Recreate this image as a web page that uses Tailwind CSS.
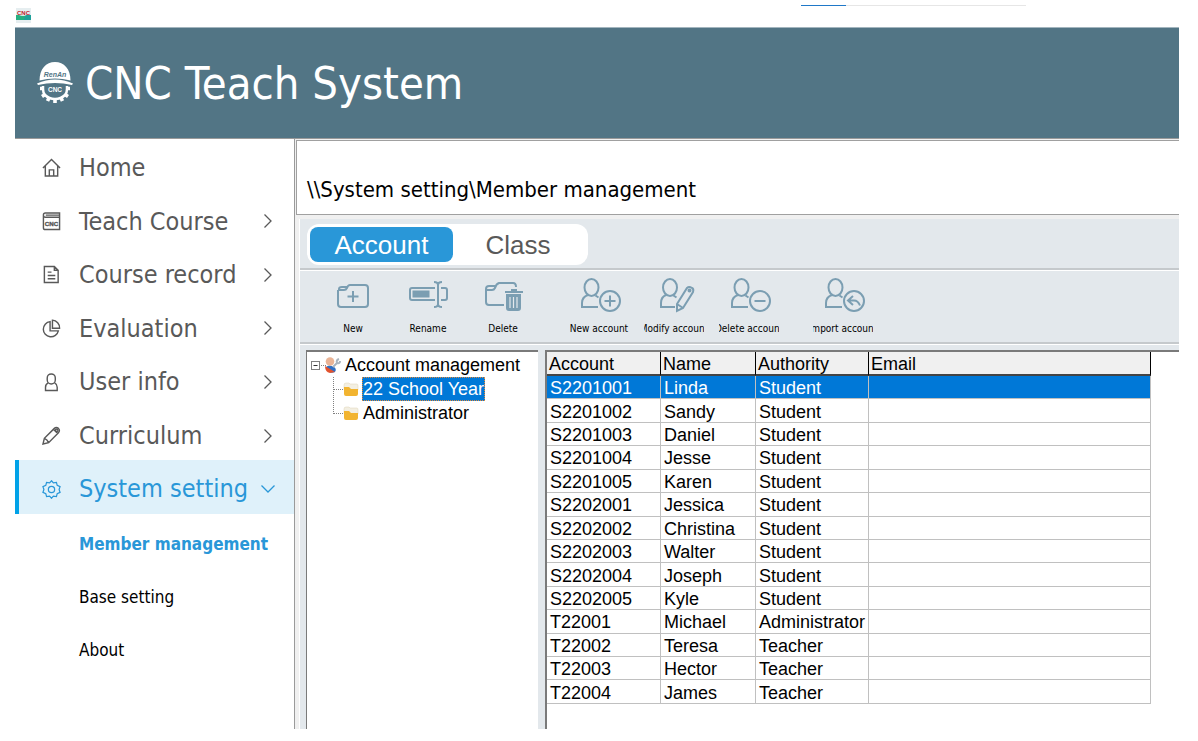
<!DOCTYPE html>
<html lang="en">
<head>
    <meta charset="UTF-8">
    <meta name="viewport" content="width=device-width, initial-scale=1.0">
    <title>CNC Teach System</title>
    <script src="https://cdn.jsdelivr.net/npm/@tailwindcss/browser@4"></script>
</head>
<body class="flex flex-col min-h-screen bg-white pl-[15px] pr-[19px] pb-3 font-['DejaVu_Sans_Condensed','Noto_Sans',sans-serif] text-black">

    <!-- window title bar -->
    <div class="flex h-[27px] shrink-0">
        <svg class="mt-2 ml-px w-[15px] h-[15px]" viewBox="0 0 15 15">
            <rect width="15" height="15" fill="#e6eef0"/>
            <path d="M0 7h3q4 2 8 0h4v5H0z" fill="#27ae80"/>
            <path d="M9 8l2-1h4v5H8z" fill="#1fa09a"/>
            <text x="7.5" y="6.5" text-anchor="middle" font-family="Liberation Sans" font-weight="bold" font-size="6" fill="#c0202c">CNC</text>
        </svg>
        <div class="flex ml-auto mr-[153px] mt-[5px] w-[225px] h-px bg-[#e6e6e6]">
            <div class="w-[45px] bg-[#1f78c8]"></div>
        </div>
    </div>

    <header class="flex items-center h-28 shrink-0 bg-[#527585] border-t border-t-[#a3b5be] border-b border-b-[#9a9a9a] pl-[22px]">
        <svg class="w-9 h-[42px] shrink-0" viewBox="0 0 36 42">
            <path d="M2.500 18.500C2.500 7 9 0 18 0s15.500 7 15.500 18.500q-15.500-4-31 0z" fill="#fff"/>
            <path d="M0 21.500q18-8 36 0l-1 1.500q-17-4-34 0z" fill="#fff"/>
            <path d="M6 24v3q0 4 2 6 4 4 10 4t10-4q2-2 2-6v-3" fill="none" stroke="#fff" stroke-width="2.500"/>
            <path d="M3 26.500h4M29 26.500h4M5 34.500l3-2M31 34.500l-3-2M10.500 39l1.500-3M18 41v-4M25.500 39L24 36" stroke="#fff" stroke-width="3.600"/>
            <text x="18" y="15" text-anchor="middle" font-family="Liberation Sans" font-style="italic" font-weight="bold" font-size="7" fill="#527585">RenAn</text>
            <text x="18" y="30" text-anchor="middle" font-family="Liberation Sans" font-weight="bold" font-size="6.500" fill="#fff">CNC</text>
        </svg>
        <h1 class="ml-3 text-[45px] leading-none text-white whitespace-nowrap">CNC Teach System</h1>
    </header>

    <div class="flex flex-1">
        <!-- sidebar -->
        <nav class="w-[279px] shrink-0">
            <ul class="grid grid-rows-7 h-[375px] text-[25px] text-[#595959] [&_a]:flex [&_a]:items-center [&_a]:h-full [&_a]:pt-1 [&_a]:pl-[27px] [&_a]:pr-[19px] [&_span]:ml-[18px] [&_span]:flex-1 [&_span]:whitespace-nowrap">
                <li><a href="#">
                    <svg class="size-[19px]" viewBox="0 0 20 20" fill="none" stroke="#595959" stroke-width="1.500"><path d="M1 10.500L10 1.500l9 9M3.500 8.500V19h13V8.500M7.700 19v-6.500h4.600V19"/></svg>
                    <span>Home</span>
                </a></li>
                <li><a href="#">
                    <svg class="size-[19px]" viewBox="0 0 20 20" fill="none" stroke="#595959" stroke-width="1.500"><path d="M18.500 5.500V1H3.500Q1.500 1 1.500 3v13.500q0 2 2 2h15v-13h-15q-2 0-2-2M4 3.300h14"/><text x="10" y="14.500" text-anchor="middle" font-family="Liberation Sans" font-weight="bold" font-size="6.500" fill="#595959" stroke-width=".4">CNC</text></svg>
                    <span>Teach Course</span>
                    <svg class="w-3.5 h-3.5" viewBox="0 0 14 14" fill="none" stroke="#595959" stroke-width="1.300"><path d="M3.500 .5L10 7l-6.500 6.500"/></svg>
                </a></li>
                <li><a href="#">
                    <svg class="size-[19px]" viewBox="0 0 20 20" fill="none" stroke="#595959" stroke-width="1.500"><path d="M2.500 1.500H13l4 4v13H2.500zM13 1.500V5.500h4M6 7.500h4M6 11h8M6 14.500h8"/></svg>
                    <span>Course record</span>
                    <svg class="w-3.5 h-3.5" viewBox="0 0 14 14" fill="none" stroke="#595959" stroke-width="1.300"><path d="M3.500 .5L10 7l-6.500 6.500"/></svg>
                </a></li>
                <li><a href="#">
                    <svg class="size-[19px]" viewBox="0 0 20 20" fill="none" stroke="#595959" stroke-width="1.500"><path d="M8.500 2.800a8 8 0 1 0 8.700 9.700H8.500zM11 1.200a8 8 0 0 1 7.500 8.500H11z"/></svg>
                    <span>Evaluation</span>
                    <svg class="w-3.5 h-3.5" viewBox="0 0 14 14" fill="none" stroke="#595959" stroke-width="1.300"><path d="M3.500 .5L10 7l-6.500 6.500"/></svg>
                </a></li>
                <li><a href="#">
                    <svg class="size-[19px]" viewBox="0 0 20 20" fill="none" stroke="#595959" stroke-width="1.500"><rect x="5.500" y="1" width="8.500" height="10.500" rx="4.200"/><path d="M6.500 10.500Q3.700 12 3.700 15v3.500h12.300V15q0-3-2.700-4.500"/></svg>
                    <span>User info</span>
                    <svg class="w-3.5 h-3.5" viewBox="0 0 14 14" fill="none" stroke="#595959" stroke-width="1.300"><path d="M3.500 .5L10 7l-6.500 6.500"/></svg>
                </a></li>
                <li><a href="#">
                    <svg class="size-[19px]" viewBox="0 0 20 20" fill="none" stroke="#595959" stroke-width="1.500"><path d="M1 19l1.500-6L13 2.500q2-2 4.300 0 2 2.300 0 4.500L7 17.500zM2.500 13q3 1 4.500 4.500M12 3.500l4.500 4.500"/><circle cx="15.500" cy="4.500" r="1.300"/></svg>
                    <span>Curriculum</span>
                    <svg class="w-3.5 h-3.5" viewBox="0 0 14 14" fill="none" stroke="#595959" stroke-width="1.300"><path d="M3.500 .5L10 7l-6.500 6.500"/></svg>
                </a></li>
                <li class="bg-[#dff1fa] text-[#2997d8] shadow-[inset_4px_0_0_#00a2e8]"><a href="#">
                    <svg class="size-[19px]" viewBox="0 0 20 20" fill="none" stroke="#2997d8" stroke-width="1.300"><path d="M10 .8l2 2.200 3.200-.5.800 3.200 3 1.300-1 3 1 3-3 1.300-.8 3.200-3.200-.5-2 2.200-2-2.200-3.200.5-.8-3.200-3-1.300 1-3-1-3 3-1.300.8-3.200 3.200.5z"/><circle cx="10" cy="10" r="3.300"/></svg>
                    <span>System setting</span>
                    <svg class="w-3.5 h-3.5" viewBox="0 0 14 14" fill="none" stroke="#2997d8" stroke-width="1.300"><path d="M.5 3.500L7 10l6.500-6.500"/></svg>
                </a></li>
            </ul>
            <ul class="pt-1 pl-16 text-[17px] [&_a]:flex [&_a]:items-center [&_a]:h-[53px] whitespace-nowrap">
                <li><a href="#" class="font-bold text-[#2997d8]">Member management</a></li>
                <li><a href="#">Base setting</a></li>
                <li><a href="#">About</a></li>
            </ul>
        </nav>

        <main class="flex flex-col flex-1 min-w-0 border-l border-[#9a9a9a] bg-[#f0f0f0]">
            <div class="flex items-end h-[75px] ml-px mt-px pb-2 pl-2.5 bg-white border-t border-l border-b border-[#a0a0a0]">
                <h2 class="text-[22px] leading-8 whitespace-nowrap">\\System setting\Member management</h2>
            </div>

            <div class="flex flex-col flex-1 mt-1 ml-1 bg-[#e3e8ec] border-l border-white">
                <div class="pt-[5px] pb-[3px] pl-[7px] border-b-2 border-[#c5c9cc]">
                    <div class="flex w-[281px] p-[3px] bg-white rounded-xl font-['Liberation_Sans',sans-serif] text-[26px] leading-[35px]">
                        <button class="w-[143px] rounded-lg bg-[#2997d8] pt-0.5 leading-[33px] text-white">Account</button>
                        <button class="w-[130px] pt-0.5 leading-[33px] text-[#595959]">Class</button>
                    </div>
                </div>

                <!-- toolbar, captions are cut at the button edge -->
                <div class="flex h-[74px] shrink-0 gap-[15px] pl-[23px] border-t border-t-white border-b-2 border-b-[#c5c9cc] [&_button]:flex [&_button]:flex-col [&_button]:items-center [&_button]:w-[60px] [&_button]:overflow-hidden [&_button]:text-[10px] [&_button]:leading-4 [&_button]:whitespace-nowrap [&_svg]:w-[50px] [&_svg]:h-10 [&_svg]:mt-1 [&_svg]:mb-1.5 [&_svg]:shrink-0">
                    <button>
                        <svg viewBox="0 0 50 40" fill="none" stroke="#7b9eb2" stroke-width="2"><path d="M10 15v14q0 3 3 3h24q3 0 3-3V13q0-3-3-3H22q-2 0-3 3-1 2-3 2h-6M11 15v-1q0-2 3-2h5M25 16v11M19.500 21.500h11"/></svg>
                        <span>New</span>
                    </button>
                    <button>
                        <svg viewBox="0 0 50 40" fill="none" stroke="#7b9eb2" stroke-width="2"><path d="M32 13H9q-2 0-2 2v8q0 2 2 2h23M38 13h4q2 0 2 2v8q0 2-2 2h-4M31 7q4 0 4 3v19q0 3-4 3M39 7q-4 0-4 3v19q0 3 4 3"/><rect x="9.500" y="15.500" width="17" height="7" fill="#7b9eb2" stroke="none"/></svg>
                        <span>Rename</span>
                    </button>
                    <button>
                        <svg viewBox="0 0 50 40" fill="none" stroke="#7b9eb2" stroke-width="2"><path d="M26 30H11q-3 0-3-3V15h6q2 0 3-2 1-4 4-5h14q3 0 3 4M8 15v-1q0-3 3-3h6M27 17h18M33 15h6"/><path d="M29 20h13v13q0 2-2 2h-9q-2 0-2-2z" fill="#7b9eb2"/><path d="M32 22v11M35.500 22v11M39 22v11" stroke="#e3e8ec" stroke-width="1.200"/></svg>
                        <span>Delete</span>
                    </button>
                    <button class="ml-[21px]">
                        <svg viewBox="0 0 50 40" fill="none" stroke="#7b9eb2" stroke-width="2"><path d="M24 32H8v-4q0-6 6-8M21.500 20.500l3 2"/><ellipse cx="17.500" cy="12.500" rx="7" ry="8.500"/><circle cx="36" cy="26" r="10"/><path d="M36 20.500v11M30.500 26h11"/></svg>
                        <span>New account</span>
                    </button>
                    <button>
                        <svg viewBox="0 0 50 40" fill="none" stroke="#7b9eb2" stroke-width="2"><path d="M26 32H12v-4q0-6 5-8M24.500 20.500l3 2"/><ellipse cx="21" cy="12.500" rx="7" ry="8.500"/><path d="M28 36v-7l10-16q2-2 5 0 2 1 1 4L34 33zM28 29l6 4"/><circle cx="40.500" cy="15.500" r="1"/></svg>
                        <span>Modify account</span>
                    </button>
                    <button>
                        <svg viewBox="0 0 50 40" fill="none" stroke="#7b9eb2" stroke-width="2"><path d="M24 32H8v-4q0-6 6-8M21.500 20.500l3 2"/><ellipse cx="17.500" cy="12.500" rx="7" ry="8.500"/><circle cx="36" cy="26" r="10"/><path d="M30.500 26h11"/></svg>
                        <span>Delete account</span>
                    </button>
                    <button class="ml-[19px]">
                        <svg viewBox="0 0 50 40" fill="none" stroke="#7b9eb2" stroke-width="2"><path d="M24 32H8v-4q0-6 6-8M21.500 20.500l3 2"/><ellipse cx="17.500" cy="12.500" rx="7" ry="8.500"/><circle cx="36" cy="26" r="10"/><path d="M35 21l-5 4.500 5 4.500M30 25.500h6q4 0 6 5"/></svg>
                        <span>Import account</span>
                    </button>
                </div>

                <div class="flex flex-1 gap-[7px] pt-[5px] pl-1.5 border-t border-white font-['Liberation_Sans',sans-serif] text-lg leading-6">
                    <!-- account tree -->
                    <div class="w-[232px] shrink-0 pt-px bg-white border-t-2 border-l border-[#7a7a7a] whitespace-nowrap">
                        <div class="flex items-center h-6 pl-1">
                            <svg class="w-[30px] h-6 shrink-0" viewBox="0 0 30 24">
                                <rect x=".5" y="8.500" width="8" height="8" fill="#fff" stroke="#808080"/>
                                <path d="M2.500 12.500h4" stroke="#333"/>
                                <path d="M10 12.500h5" stroke="#808080" stroke-dasharray="1 1"/>
                                <path d="M15 14q3-3 8 0 3 2 1 5-6 3-9-5z" fill="#2f6fc4"/>
                                <path d="M14 13l10 6-5 1q-5-1-5-7z" fill="#e2522d"/>
                                <circle cx="19" cy="8.500" r="4.300" fill="#eab496"/>
                                <path d="M22 14l4-4q-1-3 2-4M26 10q3 1 3-2" fill="none" stroke="#a9b4bf" stroke-width="2"/>
                            </svg>
                            <span class="ml-1">Account management</span>
                        </div>
                        <div class="flex items-center h-6 pl-[26px]">
                            <svg class="w-[26px] h-6 shrink-0" viewBox="0 0 26 24">
                                <path d="M.5 0v24M1 12.500h10" stroke="#808080" stroke-dasharray="1 1"/>
                                <path d="M11 8q0-2 2-2h3l1 1h7q1 0 1 2v4H11z" fill="#f3efe2" stroke="#ddd3b4" stroke-width=".5"/>
                                <path d="M11 10h5l2 2h7v5q0 2-2 2H13q-2 0-2-2z" fill="#f2b430"/>
                            </svg>
                            <span class="ml-[3px] px-px bg-[#0078d7] text-white outline outline-dotted outline-1 -outline-offset-1 outline-[#e08a3c]">22 School Year</span>
                        </div>
                        <div class="flex items-center h-6 pl-[26px]">
                            <svg class="w-[26px] h-6 shrink-0" viewBox="0 0 26 24">
                                <path d="M.5 0v13M1 12.500h10" stroke="#808080" stroke-dasharray="1 1"/>
                                <path d="M11 8q0-2 2-2h3l1 1h7q1 0 1 2v4H11z" fill="#f3efe2" stroke="#ddd3b4" stroke-width=".5"/>
                                <path d="M11 10h5l2 2h7v5q0 2-2 2H13q-2 0-2-2z" fill="#f2b430"/>
                            </svg>
                            <span class="ml-1">Administrator</span>
                        </div>
                    </div>

                    <!-- member list -->
                    <div class="flex-1 min-w-0 bg-white border-t-2 border-l-2 border-[#7a7a7a]">
                        <table class="table-fixed border-separate border-spacing-0 w-[604px] h-[352px] leading-5 [&_td]:border-r [&_td]:border-b [&_td]:border-[#c0c0c0] [&_td]:p-0 [&_td]:pt-0.5 [&_td]:pl-[3px] [&_th]:p-0 [&_th]:pt-0.5 [&_th]:pl-0.5 [&_th]:text-left [&_th]:font-normal [&_th]:bg-[#f0f0f0] [&_th]:border-r [&_th]:border-b-2 [&_th]:border-r-black [&_th]:border-b-[#444]">
                            <thead>
                                <tr class="h-6"><th class="w-[114px]">Account</th><th class="w-[95px]">Name</th><th class="w-[113px]">Authority</th><th>Email</th></tr>
                            </thead>
                            <tbody>
                                <tr class="bg-[#0078d7] text-white"><td>S2201001</td><td>Linda</td><td>Student</td><td></td></tr>
                                <tr><td>S2201002</td><td>Sandy</td><td>Student</td><td></td></tr>
                                <tr><td>S2201003</td><td>Daniel</td><td>Student</td><td></td></tr>
                                <tr><td>S2201004</td><td>Jesse</td><td>Student</td><td></td></tr>
                                <tr><td>S2201005</td><td>Karen</td><td>Student</td><td></td></tr>
                                <tr><td>S2202001</td><td>Jessica</td><td>Student</td><td></td></tr>
                                <tr><td>S2202002</td><td>Christina</td><td>Student</td><td></td></tr>
                                <tr><td>S2202003</td><td>Walter</td><td>Student</td><td></td></tr>
                                <tr><td>S2202004</td><td>Joseph</td><td>Student</td><td></td></tr>
                                <tr><td>S2202005</td><td>Kyle</td><td>Student</td><td></td></tr>
                                <tr><td>T22001</td><td>Michael</td><td>Administrator</td><td></td></tr>
                                <tr><td>T22002</td><td>Teresa</td><td>Teacher</td><td></td></tr>
                                <tr><td>T22003</td><td>Hector</td><td>Teacher</td><td></td></tr>
                                <tr><td>T22004</td><td>James</td><td>Teacher</td><td></td></tr>
                            </tbody>
                        </table>
                    </div>
                </div>
            </div>
        </main>
    </div>

</body>
</html>
